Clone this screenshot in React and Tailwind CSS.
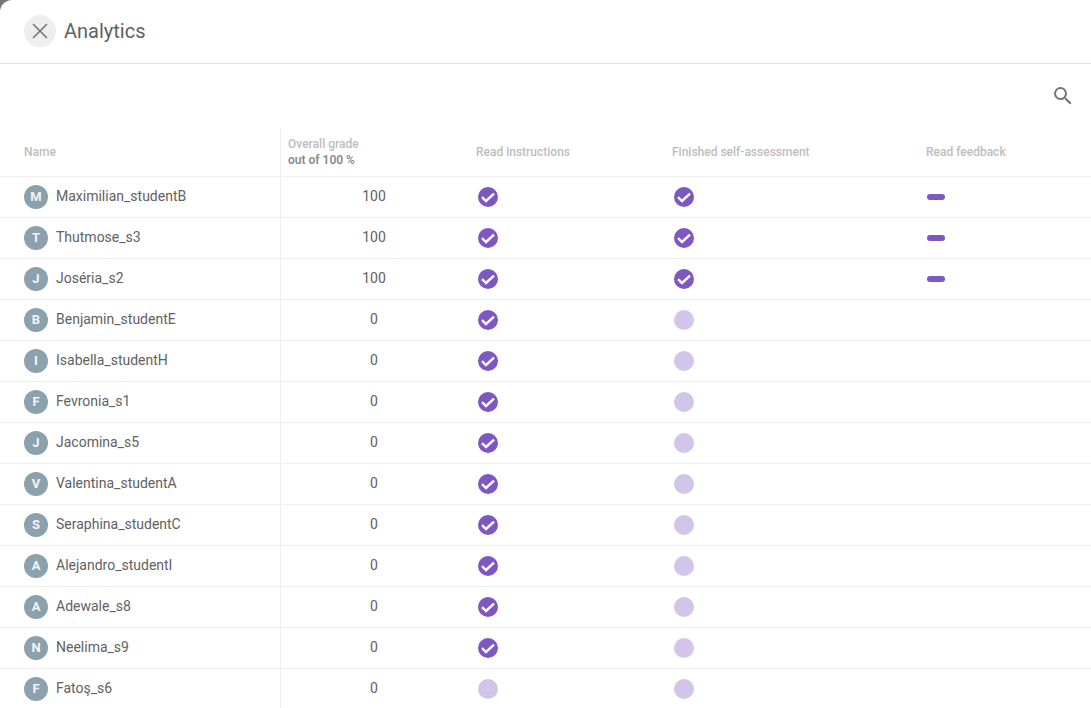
import { X } from "lucide-react";

const students = [
  { name: "Maximilian_studentB", grade: 100, read: true, finished: true, feedback: true },
  { name: "Thutmose_s3", grade: 100, read: true, finished: true, feedback: true },
  { name: "Joséria_s2", grade: 100, read: true, finished: true, feedback: true },
  { name: "Benjamin_studentE", grade: 0, read: true },
  { name: "Isabella_studentH", grade: 0, read: true },
  { name: "Fevronia_s1", grade: 0, read: true },
  { name: "Jacomina_s5", grade: 0, read: true },
  { name: "Valentina_studentA", grade: 0, read: true },
  { name: "Seraphina_studentC", grade: 0, read: true },
  { name: "Alejandro_studentI", grade: 0, read: true },
  { name: "Adewale_s8", grade: 0, read: true },
  { name: "Neelima_s9", grade: 0, read: true },
  { name: "Fatoş_s6", grade: 0, read: false },
];

const gridCols = "grid grid-cols-[280px_188px_196px_254px_1fr]";

function Status({ done }) {
  if (!done) return <div className="ml-0.5 h-5 w-5 rounded-full bg-[#d3c4ea]" />;
  return (
    <svg className="ml-0.5 h-5 w-5" viewBox="0 0 20 20">
      <circle cx="10" cy="10" r="10" fill="#7e57c2" />
      <path d="M4 10.2 8 14 16 6.6" fill="none" stroke="#fff" strokeWidth="2.4" />
    </svg>
  );
}

function Row({ s }) {
  return (
    <div className={`${gridCols} h-[41px] border-b border-[#eeeeee]`}>
      <div className="flex items-center gap-2 pl-6">
        <div className="flex h-6 w-6 items-center justify-center rounded-full bg-[#8ba1ad] text-[13px] font-bold text-[#f2f5f6]">
          {s.name[0]}
        </div>
        <span className="pb-0.5 text-sm text-[#616161]">{s.name}</span>
      </div>
      <div className="flex items-center justify-center border-l border-[#eeeeee] pr-px pb-0.5 text-sm text-[#616161]">
        {s.grade}
      </div>
      <div className="flex items-center pl-2">
        <Status done={s.read} />
      </div>
      <div className="flex items-center pl-2">
        <Status done={s.finished} />
      </div>
      <div className="flex items-center pl-[9px]">
        {s.feedback && <div className="h-1.5 w-[18px] rounded-full bg-[#7e57c2]" />}
      </div>
    </div>
  );
}

export default function App() {
  return (
    <div className="h-[708px] w-[1091px] overflow-hidden bg-[#757575] font-['Roboto',sans-serif]">
      <div className="h-full rounded-tl-xl bg-white">
        <div className="flex h-[64px] items-center gap-2 border-b border-[#e0e0e0] pb-0.5 pl-6">
          <div className="flex h-8 w-8 items-center justify-center rounded-full bg-[#eeeeee]">
            <X size={26} strokeWidth={1.4} className="text-[#757575]" />
          </div>
          <h1 className="text-xl text-[#616161]">Analytics</h1>
        </div>

        <div className="flex h-[64px] items-start justify-end pt-[20px] pr-4">
          {/* material search */}
          <svg className="h-[24px] w-[24px] text-[#757575]" viewBox="0 0 24 24" fill="currentColor">
            <path d="M15.5 14h-.79l-.28-.27A6.47 6.47 0 0 0 16 9.5 6.5 6.5 0 1 0 9.5 16c1.61 0 3.09-.59 4.23-1.57l.27.28v.79l5 4.99L20.49 19l-4.99-5zm-6 0C7.01 14 5 11.99 5 9.5S7.01 5 9.5 5 14 7.01 14 9.5 11.99 14 9.5 14z" />
          </svg>
        </div>

        <div className={`${gridCols} h-[49px] border-b border-[#eeeeee] text-xs font-medium text-[#bdbdbd]`}>
          <div className="flex items-center pl-6">Name</div>
          <div className="flex flex-col justify-center border-l border-[#eeeeee] pl-[7px] leading-4">
            <span>Overall grade</span>
            <span className="font-semibold text-[#8a8a8a]">out of 100 %</span>
          </div>
          <div className="flex items-center pl-2">Read instructions</div>
          <div className="flex items-center pl-2">Finished self-assessment</div>
          <div className="flex items-center pl-2">Read feedback</div>
        </div>

        {students.map((s) => (
          <Row key={s.name} s={s} />
        ))}
      </div>
    </div>
  );
}
